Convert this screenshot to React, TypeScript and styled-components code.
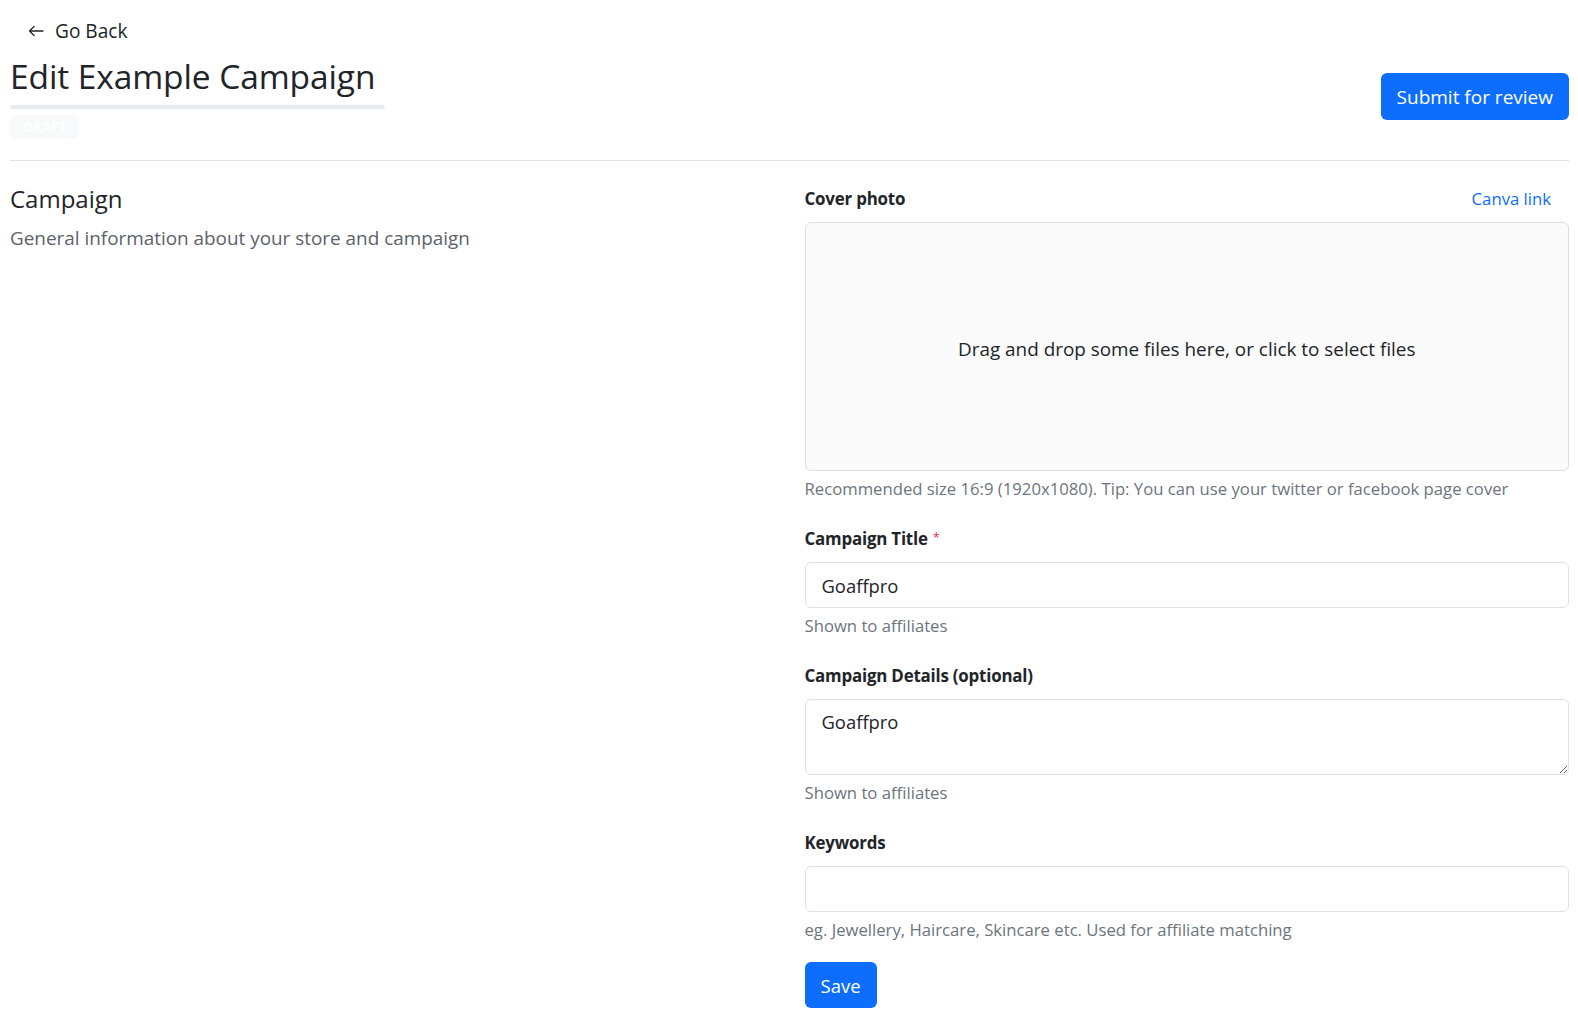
import React from "react";
import styled, { createGlobalStyle } from "styled-components";

const GlobalStyle = createGlobalStyle`
  html, body { margin: 0; padding: 0; background: #ffffff; }
  body {
    font-family: "Open Sans", "Noto Sans", Arial, sans-serif;
    color: #212529;
    font-size: 16.7px;
    -webkit-font-smoothing: antialiased;
  }
  * { box-sizing: border-box; }
`;

const Page = styled.div`
  padding: 0 9px 0 10px;
`;

const Header = styled.header`
  display: flex;
  justify-content: space-between;
  align-items: flex-start;
  border-bottom: 1px solid #dee2e6;
  padding-bottom: 21px;
`;

const HeaderLeft = styled.div`
  display: flex;
  flex-direction: column;
  align-items: flex-start;
`;

const BackLink = styled.a`
  display: flex;
  align-items: center;
  gap: 11px;
  margin-top: 20px;
  padding-left: 18px;
  height: 22px;
  font-size: 19.1px;
  color: #212529;
  text-decoration: none;
  cursor: pointer;
`;

const Title = styled.h1`
  margin: 12px 0 0 0;
  font-size: 33.5px;
  font-weight: 400;
  line-height: 44px;
  letter-spacing: -0.1px;
`;

const TitleBar = styled.div`
  width: 375px;
  height: 4px;
  border-radius: 2px;
  background: #e9ecef;
  margin-top: 7px;
`;

const Badge = styled.span`
  display: inline-flex;
  align-items: center;
  justify-content: center;
  margin-top: 6px;
  width: 69px;
  height: 24px;
  border-radius: 6px;
  background: #f8f9fa;
  color: #ffffff;
  font-size: 13.5px;
  font-weight: 700;
  letter-spacing: 0.2px;
`;

const PrimaryButton = styled.button<{ $large?: boolean }>`
  display: inline-flex;
  align-items: center;
  justify-content: center;
  height: ${(p) => (p.$large ? "47px" : "46px")};
  padding: 0 16px;
  border: none;
  border-radius: 6px;
  background: #0d6efd;
  color: #ffffff;
  font-family: inherit;
  font-size: ${(p) => (p.$large ? "19px" : "18.5px")};
  cursor: pointer;
`;

const SubmitWrap = styled.div`
  margin-top: 73px;
`;

const Content = styled.main`
  display: grid;
  grid-template-columns: 1fr 1fr;
  padding-top: 25px;
`;

const Intro = styled.section`
  display: flex;
  flex-direction: column;
`;

const SectionTitle = styled.h4`
  margin: 0;
  font-size: 24px;
  font-weight: 400;
  line-height: 26px;
`;

const SectionText = styled.p`
  margin: 12px 0 0 0;
  font-size: 18.9px;
  line-height: 28px;
  color: #5c636a;
`;

const FormColumn = styled.section`
  padding-left: 15px;
  display: flex;
  flex-direction: column;
`;

const Field = styled.div`
  display: flex;
  flex-direction: column;
  margin-bottom: 24px;
`;

const LabelRow = styled.div`
  display: flex;
  justify-content: space-between;
  align-items: center;
  margin-bottom: 10px;
`;

const Label = styled.label`
  font-size: 16.9px;
  font-weight: 700;
  line-height: 26px;
  letter-spacing: -0.2px;
`;

const Required = styled.span`
  color: #dc3545;
  font-weight: 400;
  font-size: 13px;
  margin-left: 5px;
  vertical-align: top;
  position: relative;
  top: -2px;
`;

const Link = styled.a`
  color: #0d6efd;
  text-decoration: none;
  font-size: 16.7px;
  line-height: 26px;
  margin-right: 18px;
  cursor: pointer;
`;

const DropZone = styled.div`
  height: 249px;
  display: flex;
  align-items: center;
  justify-content: center;
  padding-top: 5px;
  border: 1px solid #dedede;
  border-radius: 6px;
  background: #fafafa;
  font-size: 18.9px;
  color: #212529;
  cursor: pointer;
`;

const HelpText = styled.div`
  margin-top: 5px;
  font-size: 16.7px;
  line-height: 26px;
  color: #6c757d;
`;

const controlStyles = `
  width: 100%;
  border: 1px solid #dee2e6;
  border-radius: 6px;
  background: #ffffff;
  font-family: inherit;
  font-size: 18.4px;
  color: #212529;
  padding: 0 16px;
  outline: none;
`;

const TextInput = styled.input`
  ${controlStyles}
  height: 46px;
`;

const TextArea = styled.textarea`
  ${controlStyles}
  height: 76px;
  padding-top: 8px;
  line-height: 28px;
  resize: vertical;
  display: block;
`;

const SaveRow = styled.div`
  margin-top: -5px;
`;

const ArrowLeft = () => (
  <svg width="16" height="16" viewBox="0 0 16 16" fill="none">
    <path
      d="M15 8H1.5M1.5 8L6 3.5M1.5 8L6 12.5"
      stroke="#212529"
      strokeWidth="1.3"
      strokeLinecap="round"
      strokeLinejoin="round"
    />
  </svg>
);

export default function App() {
  return (
    <>
      <GlobalStyle />
      <Page>
        <Header>
          <HeaderLeft>
            <BackLink>
              <ArrowLeft />
              Go Back
            </BackLink>
            <Title>Edit Example Campaign</Title>
            <TitleBar />
            <Badge>DRAFT</Badge>
          </HeaderLeft>
          <SubmitWrap>
            <PrimaryButton $large>Submit for review</PrimaryButton>
          </SubmitWrap>
        </Header>
        <Content>
          <Intro>
            <SectionTitle>Campaign</SectionTitle>
            <SectionText>General information about your store and campaign</SectionText>
          </Intro>
          <FormColumn>
            <Field>
              <LabelRow>
                <Label>Cover photo</Label>
                <Link>Canva link</Link>
              </LabelRow>
              <DropZone>Drag and drop some files here, or click to select files</DropZone>
              <HelpText>
                Recommended size 16:9 (1920x1080). Tip: You can use your twitter or facebook page cover
              </HelpText>
            </Field>
            <Field>
              <LabelRow>
                <Label>
                  Campaign Title<Required>*</Required>
                </Label>
              </LabelRow>
              <TextInput defaultValue="Goaffpro" />
              <HelpText>Shown to affiliates</HelpText>
            </Field>
            <Field>
              <LabelRow>
                <Label>Campaign Details (optional)</Label>
              </LabelRow>
              <TextArea defaultValue="Goaffpro" />
              <HelpText>Shown to affiliates</HelpText>
            </Field>
            <Field>
              <LabelRow>
                <Label>Keywords</Label>
              </LabelRow>
              <TextInput defaultValue="" />
              <HelpText>eg. Jewellery, Haircare, Skincare etc. Used for affiliate matching</HelpText>
            </Field>
            <SaveRow>
              <PrimaryButton>Save</PrimaryButton>
            </SaveRow>
          </FormColumn>
        </Content>
      </Page>
    </>
  );
}
